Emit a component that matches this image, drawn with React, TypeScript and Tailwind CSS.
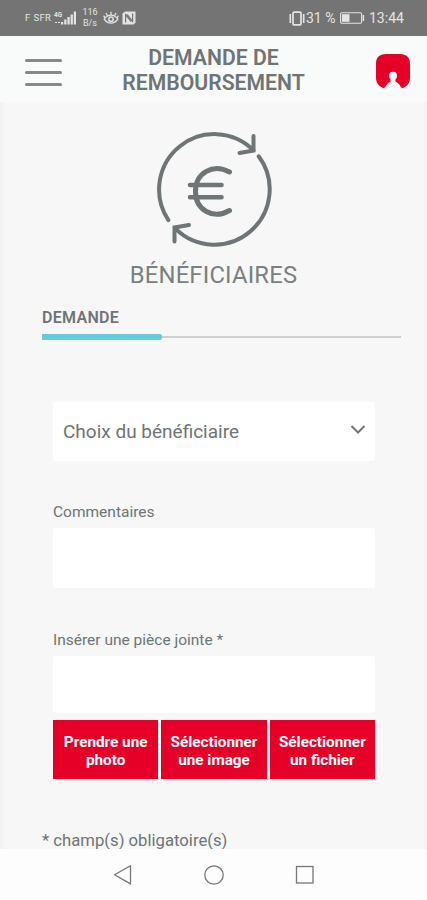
import { useState } from "react";

const attachmentActions = [
  { id: "photo", lines: ["Prendre une", "photo"] },
  { id: "image", lines: ["Sélectionner", "une image"] },
  { id: "file", lines: ["Sélectionner", "un fichier"] },
];

function StatusBar() {
  return (
    <div className="flex h-9 shrink-0 items-center justify-between bg-[#747474] pr-[22px] pl-[25px] text-[#e4e4e4]">
      <div className="flex items-center">
        <span className="w-[28px] text-[9.5px] leading-none tracking-[0.4px] whitespace-nowrap">F SFR</span>
        <svg className="h-[18px] w-[24px]" viewBox="53 9 24 18" fill="currentColor">
          <text x="54" y="16.5" fontSize="7" fontWeight="700" textLength="8" lengthAdjust="spacingAndGlyphs">
            4G
          </text>
          <path d="M55 22h2v1h-2zM58 22h2v1h-2zM61 22h2.2v2.5H61zM64.2 19.5h2.3v5h-2.3zM67.4 17h2.3v7.5h-2.3zM70.6 14.5h2.3v10h-2.3zM73.8 11.5h2.2v13h-2.2z" />
        </svg>
        <div className="ml-[4px] flex w-[18px] flex-col items-center text-[9px] leading-[11px]">
          <span>116</span>
          <span>B/s</span>
        </div>
        <svg className="ml-[4px] h-[16px] w-[16px]" viewBox="0 0 16 16" fill="none" stroke="currentColor">
          <path d="M1.2 9.2c2-3 4.2-4 6.8-4s4.8 1 6.8 4c-2 3-4.2 4-6.8 4s-4.8-1-6.8-4Z" strokeWidth="1.3" />
          <circle cx="8" cy="9.2" r="2.2" strokeWidth="1.5" />
          <path d="M8 5V1.8M4.5 5.8 3 3M11.5 5.8 13 3M2 8 .6 5.6M14 8l1.4-2.4" strokeWidth="1.3" />
        </svg>
        <svg className="ml-[3px] h-[14px] w-[14px]" viewBox="0 0 14 14">
          <path d="M3 .5h10.5V11.5L11.5 13.5H.5V2.5Z" fill="currentColor" />
          <path d="M3.6 11.5V3.6l5.6 7M10.6 2.5v7.9L5 3.4" fill="none" stroke="#747474" strokeWidth="1.2" />
        </svg>
      </div>
      <div className="flex items-center">
        <svg className="h-[15px] w-[18px]" viewBox="0 0 18 15" fill="none" stroke="currentColor">
          <rect x="5" y="1.2" width="8" height="12.6" rx="1" strokeWidth="1.7" />
          <path d="M2.3 3v9M15.7 3v9" strokeWidth="1.6" />
        </svg>
        <span className="w-[32px] text-[14px] leading-none whitespace-nowrap">31 %</span>
        <svg className="ml-[2px] h-[12px] w-[25px]" viewBox="0 0 25 12" fill="none" stroke="currentColor">
          <rect x=".6" y=".8" width="21" height="10.4" rx="1.2" strokeWidth="1.1" />
          <path d="M2 2.2h7.5v7.6H2z" fill="currentColor" stroke="none" />
          <path d="M23.4 3v6" strokeWidth="1.5" />
        </svg>
        <span className="ml-[4px] w-[36px] text-[14px] leading-none whitespace-nowrap">13:44</span>
      </div>
    </div>
  );
}

function RefundIcon() {
  return (
    <svg
      className="h-[120px] w-[120px] shrink-0"
      viewBox="154 129 120 120"
      fill="none"
      stroke="#6f7576"
      strokeWidth="4"
      strokeLinecap="round"
    >
      <path d="M168.4 220.1A55.3 55.3 0 0 1 253.4 150.2" />
      <path d="M258.7 156.3A55.3 55.3 0 0 1 175.2 228.4" />
      <path d="M253.5 136V150.5L239.5 153" />
      <path d="M174.5 241.5V227.5L189 225" />
      <path d="M229.5 172C213 163 195.5 173 195.5 191.5S213 220 229.5 210.5" strokeWidth="5" />
      <path d="M190 185H221.5M190 197.2H221.5" strokeWidth="4.6" />
    </svg>
  );
}

export default function App() {
  const [comment, setComment] = useState("");
  const [menuOpen, setMenuOpen] = useState(false);

  return (
    <div className="flex h-[900px] w-[427px] flex-col overflow-hidden bg-[#f7f7f7] font-[Roboto,sans-serif] text-[#6f7475]">
      <StatusBar />

      {/* Header */}
      <header className="grid h-[66px] shrink-0 grid-cols-[62px_1fr_62px] items-start bg-[#f9fafa]">
        <button
          className="mt-[23px] ml-[25px] flex w-[37px] flex-col gap-[9px]"
          aria-label="Menu"
          aria-expanded={menuOpen}
          onClick={() => setMenuOpen(!menuOpen)}
        >
          <span className="h-[3px] w-full rounded-full bg-[#858989]" />
          <span className="h-[3px] w-full rounded-full bg-[#858989]" />
          <span className="h-[3px] w-full rounded-full bg-[#858989]" />
        </button>
        <h1 className="mt-[9px] text-center text-[21.2px] leading-[25px] font-semibold">
          DEMANDE DE
          <br />
          REMBOURSEMENT
        </h1>
        <svg className="mt-[18px] ml-[11px] h-[34px] w-[34px]" viewBox="0 0 34 34">
          <path
            d="M10 0h14c6.5 0 10 3.5 10 9.5v14c0 5-2.2 8-6.5 10.2-1.3.5-2.300.2-3-1.200C23 29.300 20.500 27.500 17 27.500s-6 1.800-7.500 5c-.7 1.400-1.700 1.700-3 1.200C2.200 31.500 0 28.500 0 23.500v-14C0 3.500 3.500 0 10 0Z"
            fill="#e60028"
          />
          <circle cx="17" cy="21.7" r="4" fill="#f9fafa" />
          <path d="M14.500 25h5v3h-5z" fill="#f9fafa" />
        </svg>
      </header>

      <main className="flex min-h-0 flex-1 flex-col overflow-hidden border-x-[3px] border-[#f3f3f3] px-[39px] pt-[27px]">
        <div className="flex flex-col items-center">
          <RefundIcon />
          <h2 className="mt-[12px] text-[23.8px] leading-[28px] tracking-[0.2px] text-[#7a7f80]">BÉNÉFICIAIRES</h2>
        </div>

        {/* Steps */}
        <div className="mt-[20px]">
          <span className="block text-[16px] leading-[18px] font-semibold tracking-[0.3px]">DEMANDE</span>
          <div className="mt-[7px] flex w-[359px] items-center">
            <div className="h-[6px] w-[120px] rounded-r-[2px] bg-[#64cddb]" />
            <div className="h-[2px] flex-1 bg-[#ced1d2]" />
          </div>
        </div>

        {/* Form */}
        <div className="mt-[62px] ml-[11px] flex w-[322px] flex-col">
          <button className="flex h-[59px] items-center justify-between rounded-[2px] bg-white pr-[9px] pl-[10px]">
            <span className="text-[19px] leading-[24px]">Choix du bénéficiaire</span>
            <svg className="mb-[4px] h-[11px] w-[16px]" viewBox="0 0 16 11" fill="none" stroke="#6f7475" strokeWidth="2">
              <path d="m1.5 2 6.5 6.5L14.5 2" />
            </svg>
          </button>

          <label className="mt-[41px] text-[15.5px] leading-[20px]" htmlFor="comment">
            Commentaires
          </label>
          <input
            id="comment"
            className="mt-[6px] h-[60px] rounded-[3px] bg-white px-[10px] outline-none"
            value={comment}
            onChange={(e) => setComment(e.target.value)}
          />

          <span className="mt-[42px] text-[15.5px] leading-[20px]">Insérer une pièce jointe *</span>
          <div className="mt-[6px] h-[57px] rounded-[3px] bg-white" />

          <div className="mt-[7px] grid grid-cols-3 gap-[3px]">
            {attachmentActions.map((action) => (
              <button
                key={action.id}
                className="h-[59px] bg-[#e60028] pt-[3px] text-center text-[15.3px] leading-[18px] font-bold whitespace-nowrap text-white"
              >
                {action.lines[0]}
                <br />
                {action.lines[1]}
              </button>
            ))}
          </div>
        </div>

        <p className="mt-[52px] text-[16.7px] leading-[20px] whitespace-nowrap">* champ(s) obligatoire(s)</p>
      </main>

      {/* Android navigation */}
      <nav className="flex h-[51px] shrink-0 items-center bg-[#fdfdfd] pl-[113px]">
        <svg className="h-[20px] w-[203px]" viewBox="113 865 203 20" fill="none" stroke="#777" strokeWidth="1.3">
          <path d="M130.5 865.7v18.2L114.5 874.8Z" strokeLinejoin="round" />
          <circle cx="214" cy="875" r="9.2" />
          <rect x="296.5" y="866.5" width="16.5" height="16.5" />
        </svg>
      </nav>
    </div>
  );
}
